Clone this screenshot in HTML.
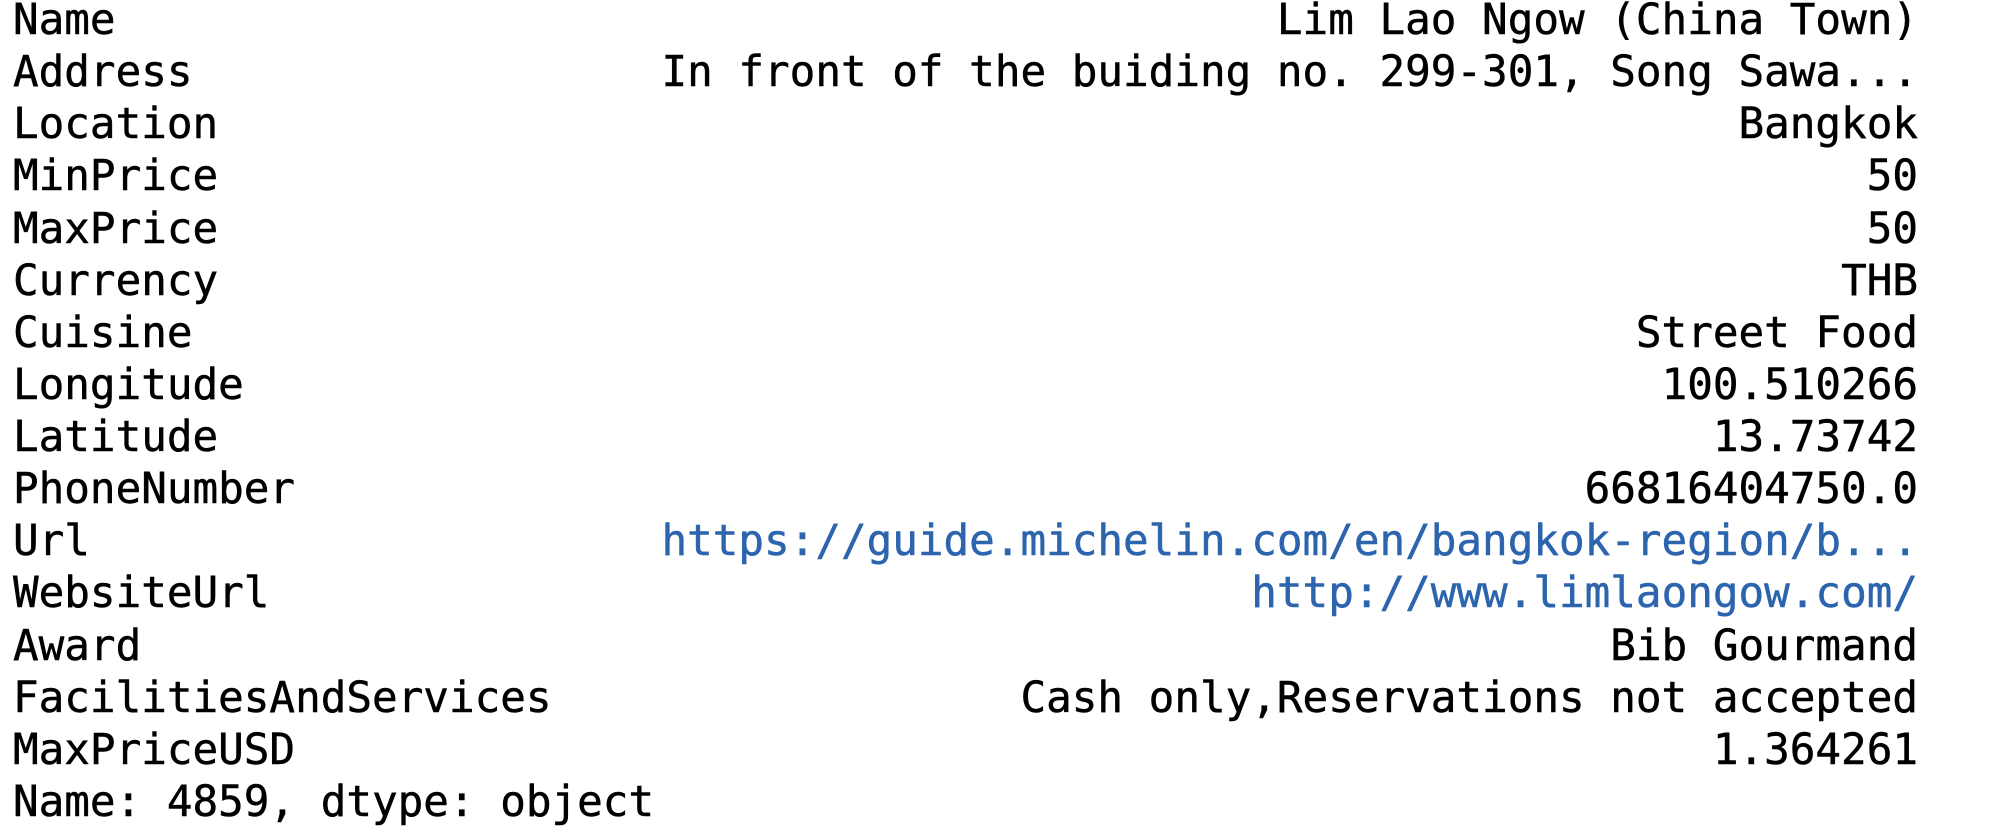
<!DOCTYPE html>
<html><head><meta charset="utf-8"><style>
html,body{margin:0;padding:0;background:#fff;width:2000px;height:832px;overflow:hidden}
.wrap{position:absolute;left:13px;top:-6px;width:1905px;font-family:"DejaVu Sans Mono","Liberation Mono",monospace;font-size:42.6px;line-height:52.13px;color:#000;-webkit-text-stroke:0.5px currentColor}
.r{display:flex;justify-content:space-between;white-space:pre}
.b{color:#2c64ad}
</style></head><body><div class="wrap">
<div class="r"><span>Name</span><span>Lim Lao Ngow (China Town)</span></div>
<div class="r"><span>Address</span><span>In front of the buiding no. 299-301, Song Sawa...</span></div>
<div class="r"><span>Location</span><span>Bangkok</span></div>
<div class="r"><span>MinPrice</span><span>50</span></div>
<div class="r"><span>MaxPrice</span><span>50</span></div>
<div class="r"><span>Currency</span><span>THB</span></div>
<div class="r"><span>Cuisine</span><span>Street Food</span></div>
<div class="r"><span>Longitude</span><span>100.510266</span></div>
<div class="r"><span>Latitude</span><span>13.73742</span></div>
<div class="r"><span>PhoneNumber</span><span>66816404750.0</span></div>
<div class="r"><span>Url</span><span class="b">https://guide.michelin.com/en/bangkok-region/b...</span></div>
<div class="r"><span>WebsiteUrl</span><span class="b">http://www.limlaongow.com/</span></div>
<div class="r"><span>Award</span><span>Bib Gourmand</span></div>
<div class="r"><span>FacilitiesAndServices</span><span>Cash only,Reservations not accepted</span></div>
<div class="r"><span>MaxPriceUSD</span><span>1.364261</span></div>
<div class="r"><span>Name: 4859, dtype: object</span><span></span></div>
</div></body></html>
